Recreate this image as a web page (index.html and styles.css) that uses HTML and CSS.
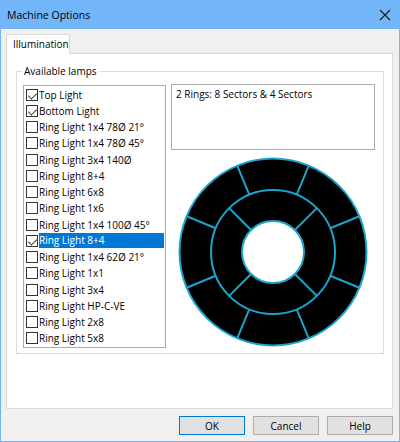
FILE: index.html
```html
<!DOCTYPE html>
<html lang="en">
<head>
    <meta charset="UTF-8">
    <title>Machine Options</title>
    <link rel="stylesheet" href="styles.css">
</head>
<body>
    <div class="window">
        <div class="titlebar">
            <span class="title">Machine Options</span>
            <svg class="close" width="12" height="12" viewBox="0 0 12 12">
                <path d="M1 1 L11 11 M11 1 L1 11" stroke="#1a1a1a" stroke-width="1.1" fill="none"/>
            </svg>
        </div>
        <div class="content">
            <div class="tabs">
                <div class="tab">Illumination</div>
            </div>
            <div class="panel">
                <fieldset class="group">
                    <legend>Available lamps</legend>
                    <div class="group-body">
                        <ul class="lamps">
                            <li class="checked"><span class="box"></span>Top Light</li>
                            <li class="checked"><span class="box"></span>Bottom Light</li>
                            <li><span class="box"></span>Ring Light 1x4 78Ø 21°</li>
                            <li><span class="box"></span>Ring Light 1x4 78Ø 45°</li>
                            <li><span class="box"></span>Ring Light 3x4 140Ø</li>
                            <li><span class="box"></span>Ring Light 8+4</li>
                            <li><span class="box"></span>Ring Light 6x8</li>
                            <li><span class="box"></span>Ring Light 1x6</li>
                            <li><span class="box"></span>Ring Light 1x4 100Ø 45°</li>
                            <li class="checked selected"><span class="box"></span><span class="label">Ring Light 8+4</span></li>
                            <li><span class="box"></span>Ring Light 1x4 62Ø 21°</li>
                            <li><span class="box"></span>Ring Light 1x1</li>
                            <li><span class="box"></span>Ring Light 3x4</li>
                            <li><span class="box"></span>Ring Light HP-C-VE</li>
                            <li><span class="box"></span>Ring Light 2x8</li>
                            <li><span class="box"></span>Ring Light 5x8</li>
                        </ul>
                        <div class="preview">
                            <div class="description">2 Rings: 8 Sectors &amp; 4 Sectors</div>
                            <svg class="rings" width="194" height="194" viewBox="0 0 194 194">
                                <g stroke="#1ca5cc" stroke-width="2">
                                    <circle cx="97" cy="97" r="93.5" fill="#000"/>
                                    <circle cx="97" cy="97" r="62" fill="none"/>
                                    <circle cx="97" cy="97" r="31" fill="#fff"/>
                                    <path d="M120.73 39.72 L132.78 10.62
                                             M73.27 39.72 L61.22 10.62
                                             M154.28 73.27 L183.38 61.22
                                             M39.72 73.27 L10.62 61.22
                                             M154.28 120.73 L183.38 132.78
                                             M39.72 120.73 L10.62 132.78
                                             M120.73 154.28 L132.78 183.38
                                             M73.27 154.28 L61.22 183.38
                                             M118.92 75.08 L140.84 53.16
                                             M75.08 75.08 L53.16 53.16
                                             M118.92 118.92 L140.84 140.84
                                             M75.08 118.92 L53.16 140.84" fill="none"/>
                                </g>
                            </svg>
                        </div>
                    </div>
                </fieldset>
            </div>
            <div class="buttons">
                <button class="default">OK</button>
                <button>Cancel</button>
                <button>Help</button>
            </div>
        </div>
    </div>
</body>
</html>
```

FILE: styles.css
```css
* {
    margin: 0;
    padding: 0;
    box-sizing: border-box;
}

body {
    width: 400px;
    height: 442px;
    font-family: "Open Sans", "Noto Sans", sans-serif;
    font-size: 10px;
    color: #000;
    background: #fff;
}

.window {
    width: 400px;
    height: 442px;
    border: 1px solid #72b5f8;
    border-top: none;
    display: flex;
    flex-direction: column;
}

.titlebar {
    height: 29px;
    background-color: #72b5f8;
    display: flex;
    align-items: center;
    justify-content: space-between;
    padding: 0 9px 0 7px;
    margin: 0 -1px;
}

.title {
    font-size: 10.5px;
    color: #000;
}

.content {
    flex: 1;
    background-color: #f0f0f0;
    padding: 5px 6px 0 5px;
    display: flex;
    flex-direction: column;
}

.tabs {
    display: flex;
    height: 19px;
    position: relative;
    z-index: 1;
}

.tab {
    width: 64px;
    height: 20px;
    background-color: #fff;
    border: 1px solid #d9d9d9;
    border-bottom: none;
    padding: 2px 0 0 6px;
}

.panel {
    height: 356px;
    background-color: #fff;
    border: 1px solid #d9d9d9;
    padding: 10px 8px 0 9px;
}

.group {
    border: 1px solid #dcdcdc;
    height: 290px;
    padding: 7px 6px 0 6px;
}

.group legend {
    margin-left: -1px;
    padding: 0 2px;
    line-height: 14px;
}

.group-body {
    display: flex;
    gap: 5px;
}

.lamps {
    list-style: none;
    width: 143px;
    height: 263px;
    border: 1px solid #a9a9a9;
    padding-top: 0.5px;
}

.lamps li {
    height: 16.25px;
    display: flex;
    align-items: center;
    padding-left: 2px;
    white-space: nowrap;
}

.box {
    width: 12px;
    height: 12px;
    border: 1px solid #333;
    margin-right: 1px;
    flex-shrink: 0;
    position: relative;
}

.checked .box::after {
    content: "";
    position: absolute;
    left: 1px;
    top: 1px;
    width: 7px;
    height: 4px;
    border-left: 1px solid #333;
    border-bottom: 1px solid #333;
    transform: translate(0.5px, 1.5px) rotate(-45deg);
}

.selected .label {
    flex: 1;
    background-color: #0078d7;
    color: #fff;
    height: 15px;
    line-height: 15px;
    margin-right: 1px;
}

.preview {
    display: flex;
    flex-direction: column;
    align-items: center;
    margin-top: -1px;
}

.description {
    width: 204px;
    height: 66px;
    border: 1px solid #a9a9a9;
    padding: 2px 4px;
}

.rings {
    margin-top: 5px;
}

.buttons {
    display: flex;
    justify-content: flex-end;
    gap: 8px;
    padding-top: 7px;
    padding-right: 0;
}

button {
    width: 66px;
    height: 19px;
    background-color: #e1e1e1;
    border: 1px solid #adadad;
    font-family: inherit;
    font-size: 10px;
    color: #000;
}

button.default {
    border-color: #0078d7;
}
```
